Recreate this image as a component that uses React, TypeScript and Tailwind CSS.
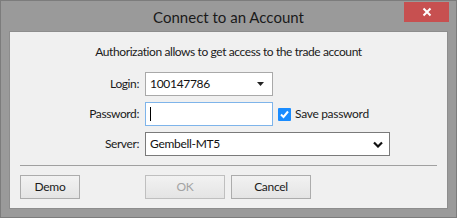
import React from 'react';

const font = { fontFamily: 'Lato, "Noto Sans", sans-serif' };

function Field({ label, children }: { label: string; children: React.ReactNode }) {
  return (
    <div className="flex items-center h-[24px]">
      <span className="w-[135px] pr-[6px] text-right text-[12px] tracking-[-0.4px] text-[#1b1b1b]">{label}</span>
      {children}
    </div>
  );
}

function Button({ label, width, disabled }: { label: string; width: string; disabled?: boolean }) {
  return (
    <div
      className={`${width} h-[24px] flex items-center justify-center text-[12px] tracking-[-0.3px] border bg-gradient-to-b from-[#f2f2f2] to-[#e4e4e4] ${
        disabled ? 'border-[#bfbfbf] text-[#a3a3a3]' : 'border-[#acacac] text-[#1b1b1b]'
      }`}
    >
      {label}
    </div>
  );
}

export default function App() {
  return (
    <div style={font} className="w-[457px] h-[218px] bg-[#9a9a9a] border border-[#7c7c7c] flex flex-col">
      <div className="relative h-[30px] flex items-center justify-center">
        <span className="text-[15px] text-[#1a1a1a] pt-[2px]">Connect to an Account</span>
        <div className="absolute top-[1px] right-[7px] w-[45px] h-[20px] bg-[#c75050] flex items-center justify-center">
          <svg width="10" height="10" viewBox="0 0 10 10">
            <path d="M1.5 1.5 L8.5 8.5 M8.5 1.5 L1.5 8.5" stroke="white" strokeWidth="2" />
          </svg>
        </div>
      </div>
      <div className="mx-[8px] h-[178px] bg-[#f0f0f0] border border-[#8d8d8d] flex flex-col">
        <div className="h-[40px] flex items-center justify-center text-[12px] tracking-[-0.4px] text-[#1b1b1b] pb-[1px]">
          Authorization allows to get access to the trade account
        </div>
        <div className="flex flex-col gap-[6px]">
          <Field label="Login:">
            <div className="w-[128px] h-[24px] bg-white border border-[#a9a9a9] flex items-center justify-between pl-[4px] pr-[8px] text-[12px] tracking-[-0.3px] text-[#111]">
              <span>100147786</span>
              <svg width="7" height="4" viewBox="0 0 7 4">
                <path d="M0 0 H7 L3.5 4 Z" fill="#222" />
              </svg>
            </div>
          </Field>
          <Field label="Password:">
            <div className="w-[128px] h-[24px] bg-white border border-[#7eb4ea] flex items-center pl-[4px]">
              <div className="w-[1px] h-[14px] bg-black" />
            </div>
            <div className="ml-[5px] w-[13px] h-[13px] bg-[#1a8cff] rounded-[1px] flex items-center justify-center">
              <svg width="11" height="11" viewBox="0 0 11 11">
                <path d="M2 5.5 L4.5 8 L9 2.5" stroke="white" strokeWidth="2" fill="none" />
              </svg>
            </div>
            <span className="ml-[4px] text-[12px] tracking-[-0.3px] text-[#1b1b1b]">Save password</span>
          </Field>
          <Field label="Server:">
            <div className="w-[245px] h-[24px] bg-white border border-[#7a7a7a] flex items-center justify-between pl-[4px] pr-[6px] text-[12px] tracking-[-0.3px] text-[#111]">
              <span>Gembell-MT5</span>
              <svg width="10" height="7" viewBox="0 0 10 7">
                <path d="M1 1.5 L5 5.5 L9 1.5" stroke="#111" strokeWidth="2.2" fill="none" />
              </svg>
            </div>
          </Field>
        </div>
        <div className="mx-[10px] mt-[9px] h-[1px] bg-[#a0a0a0]" />
        <div className="flex items-center mt-[9px] pl-[10px]">
          <Button label="Demo" width="w-[60px]" />
          <div className="ml-[65px] flex gap-[6px]">
            <Button label="OK" width="w-[80px]" disabled />
            <Button label="Cancel" width="w-[80px]" />
          </div>
        </div>
      </div>
    </div>
  );
}
